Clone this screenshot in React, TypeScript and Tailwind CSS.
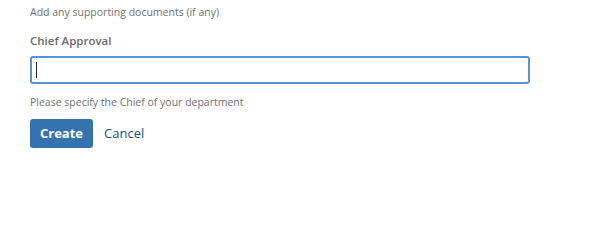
export default function App() {
  return (
    <div className="h-[211px] w-[612px] bg-white font-['Open_Sans','Noto_Sans',sans-serif]">
      <div className="px-[30px] pt-[4px]">
        <p className="text-[10.5px] leading-[16px] text-[#707070]">Add any supporting documents (if any)</p>

        <label className="mt-[13px] block text-[11.5px] font-semibold leading-[16px] text-[#6b6b6b]">
          Chief Approval
        </label>

        <div className="mt-[7px] flex h-[28px] w-[500px] items-center rounded-[3px] border-2 border-[#5b93cf] px-[4px]">
          <span className="h-[16px] w-px bg-[#222]" />
        </div>

        <p className="mt-[10px] text-[10.5px] leading-[16px] text-[#707070]">
          Please specify the Chief of your department
        </p>

        <div className="mt-[9px] flex items-center gap-[11px]">
          <button className="h-[29px] rounded-[3px] bg-[#3572b0] px-[10px] text-[13px] font-bold text-white">
            Create
          </button>
          <span className="text-[13px] text-[#205081]">Cancel</span>
        </div>
      </div>
    </div>
  );
}
